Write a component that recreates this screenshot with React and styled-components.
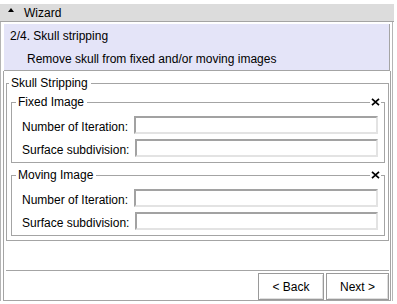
import React from 'react';
import styled, { createGlobalStyle } from 'styled-components';

const Global = createGlobalStyle`
  html, body { margin: 0; padding: 0; background: #fff; }
  body {
    font-family: "Liberation Sans", Arial, sans-serif;
    font-size: 12px;
    color: #000;
  }
  * { box-sizing: border-box; }
`;

const LINE = '#a4a4a4';

const Window = styled.div`
  padding-top: 4px;
  width: 394px;
`;

const TitleBar = styled.div`
  height: 18px;
  background: #dcdcdc;
  border-bottom: 1px solid ${LINE};
  padding: 1px 0 0 8px;
  display: flex;
  align-items: center;
  gap: 10px;
`;

const Arrow = styled.svg`
  align-self: flex-start;
  margin-top: 3px;
  flex: none;
`;

const TitleText = styled.span`
  line-height: 14px;
`;

const Frame = styled.div`
  width: 393px;
  border-left: 1px solid #b4b4b4;
  border-right: 1px solid #b4b4b4;
  padding: 2px 1px 0 2px;
  display: flex;
  flex-direction: column;
`;

const StepHeader = styled.div`
  margin: 0 1px;
  height: 47px;
  background: #e4e4f8;
  border-right: 1px solid ${LINE};
  border-bottom: 1px solid ${LINE};
  padding: 5px 0 0 6px;
  display: flex;
  flex-direction: column;
  gap: 9px;
`;

const StepLine = styled.div`
  line-height: 14px;
  white-space: nowrap;
  padding-left: ${p => p.$indent || 0}px;
`;

const Panel = styled.div`
  border: 1px solid ${LINE};
  border-top: none;
  display: flex;
  flex-direction: column;
`;

const Group = styled.div`
  display: flex;
  flex-direction: column;
  margin: ${p => p.$margin || '0'};
`;

const GroupHead = styled.div`
  display: flex;
  height: 14px;
  line-height: 14px;
`;

const Corner = styled.span`
  flex: none;
  width: ${p => p.$w}px;
  height: 7px;
  align-self: flex-end;
  border-top: 1px solid ${LINE};
  border-left: 1px solid ${LINE};
`;

const GroupTitle = styled.span`
  padding: 0 3px 0 2px;
  white-space: nowrap;
`;

const Rule = styled.span`
  flex: 1;
  height: 7px;
  align-self: flex-end;
  border-top: 1px solid ${LINE};
`;

const CloseIcon = styled.svg`
  flex: none;
  align-self: center;
  margin: 0 1px;
`;

const Tail = styled.span`
  flex: none;
  width: ${p => p.$w}px;
  height: 7px;
  align-self: flex-end;
  border-top: 1px solid ${LINE};
  border-right: 1px solid ${LINE};
`;

const GroupBody = styled.div`
  border: 1px solid ${LINE};
  border-top: none;
  padding: ${p => p.$pad};
  display: flex;
  flex-direction: column;
  gap: ${p => p.$gap || 0}px;
`;

const Row = styled.div`
  display: flex;
  align-items: flex-end;
  gap: 6px;
  height: 18px;
`;

const Label = styled.span`
  line-height: 14px;
  white-space: nowrap;
`;

const Field = styled.input`
  flex: 1;
  min-width: 0;
  height: 18px;
  margin: 0;
  padding: 0 2px;
  background: #fff;
  border-style: solid;
  border-width: 2px;
  border-color: #a2a2a2 #e3e3e3 #e3e3e3 #a2a2a2;
  outline: none;
  font: inherit;
`;

const Separator = styled.div`
  margin: 29px 1px 0 2px;
  height: 1px;
  background: ${LINE};
`;

const ButtonRow = styled.div`
  display: flex;
  justify-content: flex-end;
  gap: 2px;
  margin-top: 2px;
  padding-right: 1px;
`;

const Button = styled.button`
  width: ${p => p.$w}px;
  height: 27px;
  margin: 0;
  padding: 0;
  background: #fff;
  border: 1px solid #9a9a9a;
  box-shadow: inset 1px 1px 0 #fff, inset -1px -1px 0 #dedede;
  font: inherit;
  color: #000;
  line-height: 14px;
`;

function Close() {
  return (
    <CloseIcon width="9" height="8" viewBox="0 0 9 8">
      <path d="M1 0.8 L8 7.2 M8 0.8 L1 7.2" stroke="#000" strokeWidth="1.7" fill="none" />
    </CloseIcon>
  );
}

function ImageGroup({ title, margin }) {
  return (
    <Group $margin={margin}>
      <GroupHead>
        <Corner $w={5} />
        <GroupTitle>{title}</GroupTitle>
        <Rule />
        <Close />
        <Tail $w={4} />
      </GroupHead>
      <GroupBody $pad="7px 6px 5px 10px" $gap={5}>
        <Row>
          <Label>Number of Iteration:</Label>
          <Field readOnly />
        </Row>
        <Row>
          <Label>Surface subdivision:</Label>
          <Field readOnly />
        </Row>
      </GroupBody>
    </Group>
  );
}

export default function App() {
  return (
    <>
      <Global />
      <Window>
        <TitleBar>
          <Arrow width="6" height="4" viewBox="0 0 6 4">
            <polygon points="0,4 3,0 6,4" fill="#000" />
          </Arrow>
          <TitleText>Wizard</TitleText>
        </TitleBar>
        <Frame>
          <StepHeader>
            <StepLine>2/4. Skull stripping</StepLine>
            <StepLine $indent={17}>Remove skull from fixed and/or moving images</StepLine>
          </StepHeader>
          <Panel>
            <Group $margin="5px 1px 0 2px">
              <GroupHead>
                <Corner $w={3} />
                <GroupTitle>Skull Stripping</GroupTitle>
                <Rule />
                <Tail $w={1} />
              </GroupHead>
              <GroupBody $pad="5px 3px 4px 4px" $gap={5}>
                <ImageGroup title="Fixed Image" />
                <ImageGroup title="Moving Image" />
              </GroupBody>
            </Group>
            <Separator />
            <ButtonRow>
              <Button $w={66}>&lt; Back</Button>
              <Button $w={63}>Next &gt;</Button>
            </ButtonRow>
          </Panel>
        </Frame>
      </Window>
    </>
  );
}
